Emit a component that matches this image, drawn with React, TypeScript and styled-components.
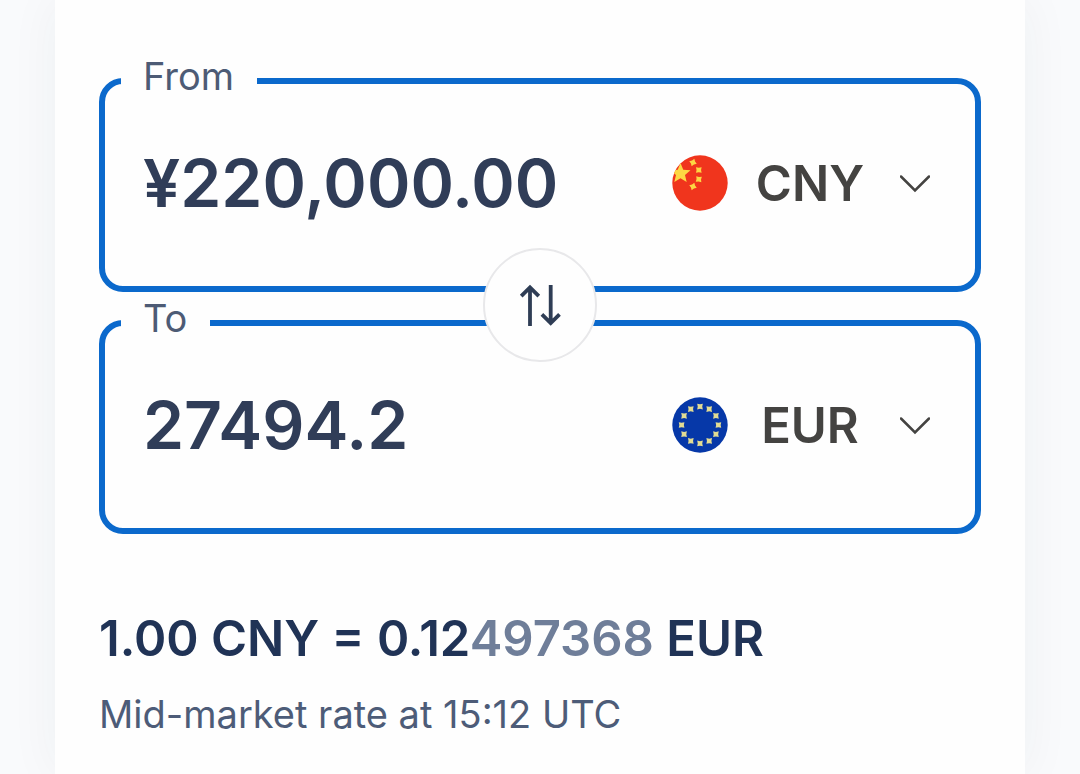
import React, { useState } from "react";
import styled, { createGlobalStyle } from "styled-components";

const GlobalStyle = createGlobalStyle`
  *, *::before, *::after { box-sizing: border-box; }
  body {
    margin: 0;
    background: #f9fafc;
    font-family: Inter, "Liberation Sans", sans-serif;
  }
`;

const Page = styled.div`
  display: flex;
  min-height: 100vh;
  padding: 0 55px;
  overflow: hidden;
`;

const Card = styled.main`
  flex: 1;
  min-width: 0;
  padding: 56px 44px 32px;
  background: #fefefe;
  box-shadow: 0 0 48px rgba(40, 50, 60, 0.05);
`;

const Fields = styled.form`
  position: relative;
  display: flex;
  flex-direction: column;
  gap: 6px;
`;

const Field = styled.fieldset`
  min-width: 0;
  margin: 0;
  padding: 0 45px 26px 38px;
  border: 6px solid #0b69cc;
  border-radius: 24px;
`;

const Legend = styled.legend`
  margin-left: -22px;
  padding: 0 23px 10px 22px;
  font-size: 38px;
  line-height: 40px;
  color: #4d5b75;
`;

const FieldRow = styled.div`
  display: flex;
  align-items: center;
  height: 154px;
`;

const AmountInput = styled.input`
  flex: 1;
  min-width: 0;
  height: 96px;
  padding: 0;
  border: 0;
  outline: 0;
  background: transparent;
  font-family: inherit;
  font-size: 66px;
  font-weight: 600;
  color: #303d58;
`;

const CurrencyPicker = styled.label`
  display: flex;
  align-items: center;
`;

const CurrencySelect = styled.select`
  appearance: none;
  width: 148px;
  height: 72px;
  margin: 0 16px 0 8px;
  padding: 0;
  border: 0;
  outline: 0;
  background: transparent;
  font-family: inherit;
  font-size: 49px;
  font-weight: 600;
  text-align: center;
  text-align-last: center;
  color: #444341;
  cursor: pointer;
`;

const SwapButton = styled.button`
  position: absolute;
  top: 192px;
  left: 50%;
  display: flex;
  align-items: center;
  justify-content: center;
  width: 114px;
  height: 114px;
  padding: 0;
  border: 2px solid #e8e8ea;
  border-radius: 50%;
  background: #fefefe;
  color: #2f3d55;
  transform: translateX(-50%);
  cursor: pointer;
`;

const Rate = styled.p`
  margin: 75px 0 0;
  font-size: 49px;
  font-weight: 600;
  line-height: 60px;
  color: #203356;
`;

const FaintDigits = styled.span`
  color: #6f7e99;
`;

const RateNote = styled.p`
  margin: 21px 0 0;
  font-size: 38px;
  line-height: 48px;
  color: #4d5c78;
`;

function starPoints(cx: number, cy: number, r: number, tips = 5, turn = 0) {
  const inner = tips === 4 ? 0.56 : 0.45;
  return Array.from({ length: tips * 2 }, (_, i) => {
    const radius = i % 2 ? r * inner : r;
    const angle = (((i * 180) / tips - 90 + turn) * Math.PI) / 180;
    return `${(cx + radius * Math.cos(angle)).toFixed(2)},${(cy + radius * Math.sin(angle)).toFixed(2)}`;
  }).join(" ");
}

function ChinaFlag() {
  return (
    <svg width="56" height="56" viewBox="0 0 56 56" aria-hidden="true">
      <clipPath id="cn-disc">
        <circle cx="28" cy="28" r="27.7" />
      </clipPath>
      <g clipPath="url(#cn-disc)">
        <rect width="56" height="56" fill="#f0351d" />
        <g fill="#fdd743">
          <polygon points={starPoints(8.5, 18.5, 10.5)} />
          <polygon points={starPoints(21, 7.5, 4, 4, 20)} />
          <polygon points={starPoints(26.8, 15, 4, 4, 45)} />
          <polygon points={starPoints(26.8, 24.2, 4, 4, 50)} />
          <polygon points={starPoints(21, 31.5, 4, 4, 20)} />
        </g>
      </g>
    </svg>
  );
}

function EuFlag() {
  return (
    <svg width="56" height="56" viewBox="0 0 56 56" aria-hidden="true">
      <circle cx="28" cy="28" r="27.7" fill="#0638a8" />
      <g fill="#e2dc93">
        {Array.from({ length: 12 }, (_, i) => {
          const a = (i * Math.PI) / 6;
          return (
            <polygon
              key={i}
              points={starPoints(28 + 18.4 * Math.sin(a), 28 - 18.4 * Math.cos(a), 4, 4, 45)}
            />
          );
        })}
      </g>
    </svg>
  );
}

function Chevron() {
  return (
    <svg width="30" height="30" viewBox="0 0 30 30" fill="none" aria-hidden="true">
      <path d="M1 8.5 15 22.5 29 8.5" stroke="#444341" strokeWidth="2.5" strokeLinecap="round" />
    </svg>
  );
}

function SwapArrows() {
  return (
    <svg width="44" height="44" viewBox="0 0 44 44" fill="none" stroke="currentColor" strokeWidth="3.8" aria-hidden="true">
      <path d="M12 43V4M3.2 13.2 12 4.4l8.8 8.8M32.7 2v39M23.9 31.3l8.8 8.8 8.8-8.8" />
    </svg>
  );
}

const flags: Record<string, React.ReactNode> = { CNY: <ChinaFlag />, EUR: <EuFlag /> };

interface MoneyFieldProps {
  label: string;
  amount: string;
  currency: string;
  onAmount: (v: string) => void;
  onCurrency: (v: string) => void;
}

function MoneyField({ label, amount, currency, onAmount, onCurrency }: MoneyFieldProps) {
  return (
    <Field>
      <Legend>{label}</Legend>
      <FieldRow>
        <AmountInput
          aria-label={`${label} amount`}
          inputMode="decimal"
          value={amount}
          onChange={(e) => onAmount(e.target.value)}
        />
        <CurrencyPicker>
          {flags[currency]}
          <CurrencySelect
            aria-label={`${label} currency`}
            value={currency}
            onChange={(e) => onCurrency(e.target.value)}
          >
            <option>CNY</option>
            <option>EUR</option>
          </CurrencySelect>
          <Chevron />
        </CurrencyPicker>
      </FieldRow>
    </Field>
  );
}

export default function App() {
  const [from, setFrom] = useState({ amount: "¥220,000.00", currency: "CNY" });
  const [to, setTo] = useState({ amount: "27494.2", currency: "EUR" });

  const swap = () => {
    setFrom(to);
    setTo(from);
  };

  return (
    <>
      <GlobalStyle />
      <Page>
        <Card>
          <Fields>
            <MoneyField
              label="From"
              {...from}
              onAmount={(amount) => setFrom({ ...from, amount })}
              onCurrency={(currency) => setFrom({ ...from, currency })}
            />
            <MoneyField
              label="To"
              {...to}
              onAmount={(amount) => setTo({ ...to, amount })}
              onCurrency={(currency) => setTo({ ...to, currency })}
            />
            <SwapButton type="button" aria-label="Swap currencies" onClick={swap}>
              <SwapArrows />
            </SwapButton>
          </Fields>
          <Rate>
            1.00 CNY = 0.12<FaintDigits>497368</FaintDigits> EUR
          </Rate>
          <RateNote>Mid-market rate at 15:12 UTC</RateNote>
        </Card>
      </Page>
    </>
  );
}
